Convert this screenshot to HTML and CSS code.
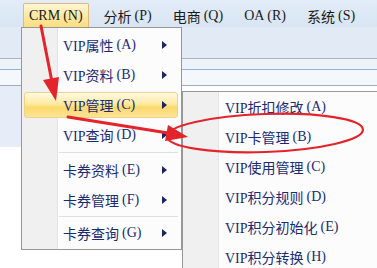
FILE: index.html
```html
<!doctype html>
<html lang="zh-CN">
  <head>
    <meta charset="UTF-8" />
    <meta name="viewport" content="width=device-width, initial-scale=1.0" />
    <title>CRM 菜单</title>
    <link rel="stylesheet" href="styles.css">
  </head>
  <body>
    <div class="window">
      <nav class="menubar">
        <span class="menubar-item open">CRM<span class="key">(N)</span></span>
        <span class="menubar-item">分析<span class="key">(P)</span></span>
        <span class="menubar-item">电商<span class="key">(Q)</span></span>
        <span class="menubar-item">OA<span class="key">(R)</span></span>
        <span class="menubar-item">系统<span class="key">(S)</span></span>
      </nav>

      <div class="toolbar"></div>
      <div class="tabstrip">
        <div class="tab-row"></div>
        <div class="tab-row"></div>
      </div>
      <div class="workspace">
        <div class="sidepanel"></div>
      </div>

      <!-- CRM 下拉菜单 -->
      <ul class="menu crm-menu">
        <li class="menu-item has-sub">VIP属性<span class="key">(A)</span><i class="arrow"></i></li>
        <li class="menu-item has-sub">VIP资料<span class="key">(B)</span><i class="arrow"></i></li>
        <li class="menu-item has-sub active">VIP管理<span class="key">(C)</span><i class="arrow"></i></li>
        <li class="menu-item has-sub">VIP查询<span class="key">(D)</span><i class="arrow"></i></li>
        <li class="menu-sep"></li>
        <li class="menu-item has-sub">卡券资料<span class="key">(E)</span><i class="arrow"></i></li>
        <li class="menu-item has-sub">卡券管理<span class="key">(F)</span><i class="arrow"></i></li>
        <li class="menu-sep thin"></li>
        <li class="menu-item has-sub">卡券查询<span class="key">(G)</span><i class="arrow"></i></li>
      </ul>

      <!-- VIP管理 子菜单 -->
      <ul class="menu sub-menu">
        <li class="menu-item">VIP折扣修改<span class="key">(A)</span></li>
        <li class="menu-item">VIP卡管理<span class="key">(B)</span></li>
        <li class="menu-item">VIP使用管理<span class="key">(C)</span></li>
        <li class="menu-item">VIP积分规则<span class="key">(D)</span></li>
        <li class="menu-item">VIP积分初始化<span class="key">(E)</span></li>
        <li class="menu-item">VIP积分转换<span class="key">(H)</span></li>
      </ul>

      <!-- 红色标注 -->
      <svg class="marks" width="377" height="268" viewBox="0 0 377 268">
        <line x1="41" y1="26" x2="52" y2="82" />
        <polygon points="56,101 43,80 59,77" />
        <line x1="68" y1="117" x2="168" y2="133" />
        <polygon points="188,137 165,141 168,125" />
        <ellipse cx="265" cy="133" rx="98" ry="19" transform="rotate(-2 265 133)" />
      </svg>
    </div>
  </body>
</html>
```

FILE: styles.css
```css
:root {
  --menu-text: #1a2b72;
  --menu-border: #979797;
  --icon-col: #f0f0f0;
  --mark-red: #e3242b;
}

* {
  box-sizing: border-box;
  margin: 0;
  padding: 0;
}

body {
  font-family: "Liberation Serif", "Noto Sans CJK SC", serif;
  font-size: 14px;
  background: #fff;
}

.window {
  position: relative;
  width: 377px;
  height: 268px;
  overflow: hidden;
  background: #fff;
}

.key {
  margin-left: 3px;
}

/* menu bar */
.menubar {
  display: flex;
  gap: 9px;
  height: 27px;
  padding: 3px 0 0 23px;
  background: linear-gradient(#e3ecf8, #d9e5f4);
  color: #1a1a1a;
}

.menubar-item {
  display: flex;
  align-items: center;
  padding: 0 5px;
  border: 1px solid transparent;
  border-bottom: none;
  border-radius: 2px 2px 0 0;
}

.menubar-item.open {
  background: linear-gradient(#fff6d6, #fde9a6 50%, #fcdc80);
  border-color: #dcbc78;
}

/* background window parts */
.toolbar {
  height: 31px;
  background: #e2eaf6;
}

.tabstrip {
  border-top: 1px solid #a9b5c4;
  border-bottom: 1px solid #a3abb6;
  background: #f4f7fc;
}

.tab-row:first-child {
  height: 11px;
  background: #eef3fa;
  border-bottom: 1px solid #8db4df;
}

.tab-row + .tab-row {
  height: 15px;
}

.workspace {
  height: 182px;
}

.sidepanel {
  width: 22px;
  height: 61px;
  background: #e6edf8;
}

/* dropdown menus */
.menu {
  position: absolute;
  display: flex;
  flex-direction: column;
  list-style: none;
  border: 1px solid var(--menu-border);
  color: var(--menu-text);
  background: linear-gradient(
    to right,
    var(--icon-col) 0 35px,
    #e3e3e3 35px 36px,
    #fff 36px 37px,
    #fcfcfc 37px
  );
}

.crm-menu {
  left: 21px;
  top: 27px;
  width: 161px;
  padding: 2px 0 1px;
}

.sub-menu {
  left: 182px;
  top: 91px;
  width: 200px;
  height: 190px;
}

.menu-item {
  display: flex;
  align-items: center;
  flex: none;
  height: 26px;
  margin: 2px 3px 2px 2px;
  padding-left: 38px;
  border: 1px solid transparent;
  border-radius: 3px;
  white-space: nowrap;
}

.sub-menu .menu-item {
  margin-left: 3px;
}

.menu-item.active {
  background: linear-gradient(#fffae4, #fdeaa2 45%, #fbd96a 60%, #fde39a);
  border-color: #efd284;
}

.arrow {
  margin-left: auto;
  margin-right: 10px;
  border-left: 5px solid #1b2460;
  border-top: 4px solid transparent;
  border-bottom: 4px solid transparent;
}

.menu-sep {
  flex: none;
  height: 1px;
  margin: 2px 3px 2px 37px;
  background: #e0e0e0;
}

.menu-sep.thin {
  margin-top: 1px;
  margin-bottom: 1px;
}

/* red annotation marks */
.marks {
  position: absolute;
  left: 0;
  top: 0;
  pointer-events: none;
}

.marks line {
  stroke: var(--mark-red);
  stroke-width: 3;
  stroke-linecap: round;
}

.marks polygon {
  fill: var(--mark-red);
}

.marks ellipse {
  fill: none;
  stroke: var(--mark-red);
  stroke-width: 2.2;
}
```
